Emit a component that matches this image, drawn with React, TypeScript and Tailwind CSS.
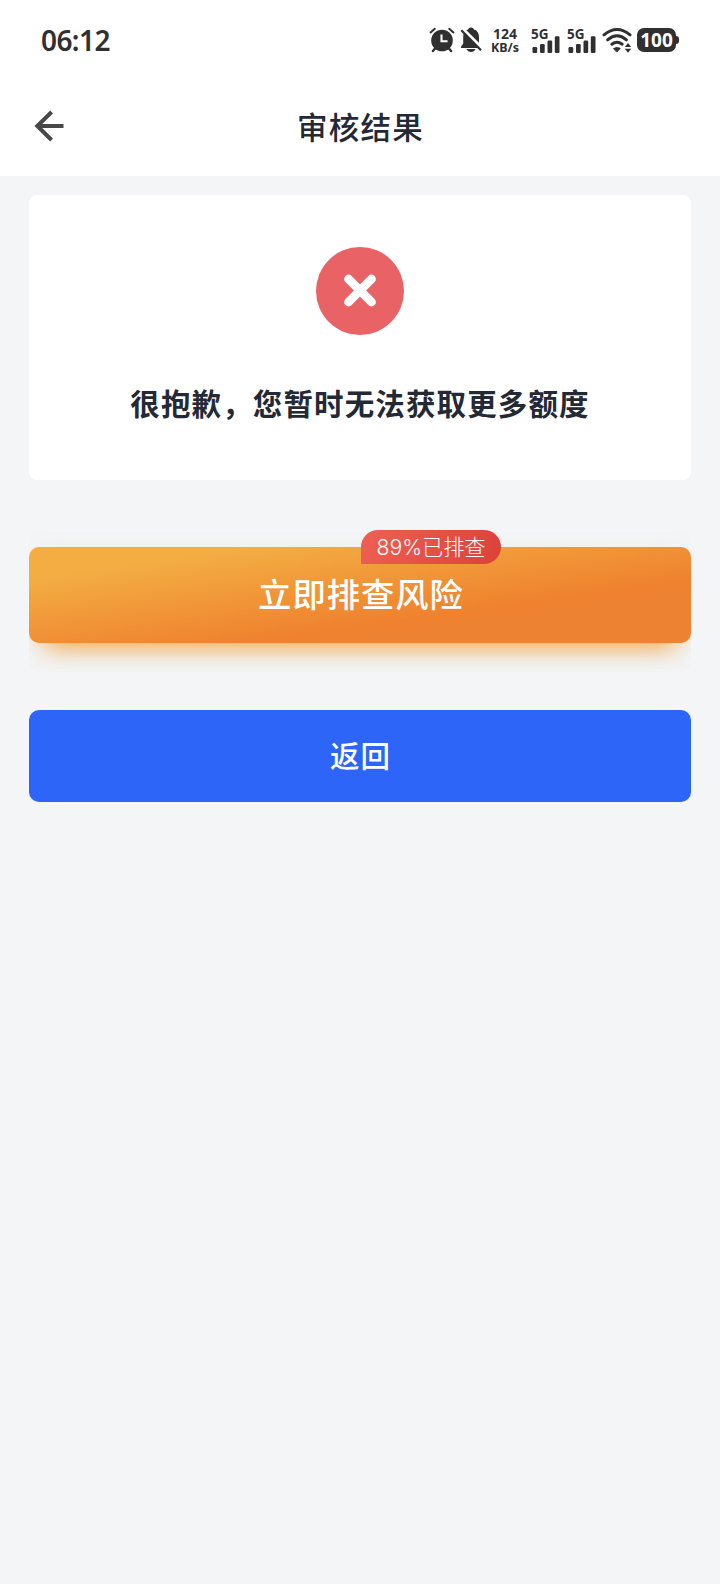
function AlarmIcon() {
  return (
    <svg className="-ml-px h-7 w-7 shrink-0" viewBox="428 26 28 28" fill="none" stroke="#303030" strokeLinecap="round">
      <circle cx="442" cy="40.5" r="10.8" fill="#303030" stroke="none" />
      <path d="M430.6 32.4l4.2-3.6M453.4 32.4l-4.2-3.6" strokeWidth="2" />
      <path d="M435.5 48l-2.6 3M448.5 48l2.6 3" strokeWidth="2.4" />
      <path d="M441.5 35.5v5.7h5" stroke="#fff" strokeWidth="2.1" strokeLinecap="square" />
    </svg>
  );
}

function BellOffIcon() {
  return (
    <svg className="h-7 w-6 shrink-0" viewBox="459 26 24 28" fill="#303030">
      <path d="M471 27.6a3 3 0 0 1 3 2c3.400 1 5 4 5 7.400v6.400l2 3.400v1.100h-20v-1.100l2.200-3.400v-6.400c0-3.600 1.500-6.400 4.800-7.400a3 3 0 0 1 3-2z" />
      <path d="M466.500 49h9q-1.300 3-4.500 3t-4.500-3z" />
      <path d="M461.800 28.200l21 21" stroke="#fff" strokeWidth="3.600" />
      <path d="M461.300 30.300l19.700 20" stroke="#303030" strokeWidth="2.300" />
    </svg>
  );
}

function Signal() {
  return (
    <div className="flex h-[25px] w-7 shrink-0 flex-col justify-between">
      <span className="h-[11px] text-[13.500px] leading-[13px] font-bold">5G</span>
      <svg className="-mt-[3px] ml-[1px] h-[17px] w-7 shrink-0" viewBox="0 0 28 17" fill="#303030">
        <rect x="0.500" y="11" width="4.700" height="6" rx="1.200" />
        <rect x="8" y="8" width="4.700" height="9" rx="1.200" />
        <rect x="15.500" y="4.500" width="4.700" height="12.500" rx="1.200" />
        <rect x="22.800" y="0.300" width="4.700" height="16.700" rx="1.200" />
      </svg>
    </div>
  );
}

function WifiIcon() {
  return (
    <svg className="h-7 w-[30px] shrink-0" viewBox="602 26 30 28" fill="none" stroke="#303030" strokeWidth="3" strokeLinecap="round">
      <path d="M604 34.800Q617 24.200 630 34.800" />
      <path d="M607.600 39.800Q617 31.700 626.400 39.800" />
      <path d="M611.800 44.200Q617 40.400 622.200 44.200" />
      <path d="M613.800 48.400q3.200-1.800 6.400 0L617 51.800z" fill="#303030" strokeWidth="1" strokeLinejoin="round" />
      <path d="M624.800 47h6.400l-3.200-4zM624.800 48.800h6.400l-3.200 4z" fill="#303030" stroke="none" />
    </svg>
  );
}

function StatusBar() {
  return (
    <div className="flex h-20 items-center pl-[41px] font-['Noto_Sans',sans-serif] text-[#303030]">
      <time className="w-[388px] text-[28px] leading-none font-semibold tracking-[-0.600px]">06:12</time>
      <AlarmIcon />
      <div className="ml-[3px] flex">
        <BellOffIcon />
      </div>
      <div className="ml-[6px] flex w-8 flex-col items-center pt-[2px] leading-[14px] font-bold">
        <span className="h-[14px] text-[14px]">124</span>
        <span className="h-[14px] text-[12.500px]">KB/s</span>
      </div>
      <div className="ml-[10px] flex gap-[8px]">
        <Signal />
        <Signal />
      </div>
      <div className="ml-[7px] flex">
        <WifiIcon />
      </div>
      <div className="ml-[5px] flex items-center">
        <div className="flex h-6 w-[39px] items-center justify-center rounded-[7px] bg-[#303030] text-[19px] leading-none font-bold text-white">
          100
        </div>
        <div className="h-2 w-[3px] rounded-r-full bg-[#303030]" />
      </div>
    </div>
  );
}

function Header() {
  return (
    <header className="grid h-24 grid-cols-[100px_1fr_100px] items-start">
      <button aria-label="返回" className="pt-[30px] pl-[34px]">
        <svg className="h-8 w-8" viewBox="0 0 32 32" fill="none" stroke="#484848" strokeWidth="4">
          <path d="M17.600 2L3.300 16l14.300 14M3 16h26.500" />
        </svg>
      </button>
      <h1 className="pt-[30px] pl-px text-center text-[30.500px] leading-[32px] font-medium tracking-[1.200px]">审核结果</h1>
      <span />
    </header>
  );
}

export default function App() {
  return (
    <div className="flex min-h-[1584px] w-[720px] flex-col bg-[#f3f5f7] font-['Noto_Sans_CJK_SC',sans-serif] text-[#232a35]">
      <div className="bg-white">
        <StatusBar />
        <Header />
      </div>
      <main className="flex flex-col px-[29px] pt-[19px]">
        <section className="flex h-[285px] flex-col items-center rounded-lg bg-white pt-[52px]">
          <svg className="h-[88px] w-[88px]" viewBox="0 0 88 88">
            <circle cx="44" cy="44" r="44" fill="#e96265" />
            <path d="M32.500 32L55.500 55M55.500 32L32.500 55" stroke="#fff" strokeWidth="8.800" strokeLinecap="round" />
          </svg>
          <p className="mt-[47px] text-[29.500px] leading-[40px] font-bold tracking-[1.130px] whitespace-nowrap">
            很抱歉，您暂时无法获取更多额度
          </p>
        </section>
        <div className="mt-[42px] h-[150px] overflow-hidden pt-[25px]">
          <button className="relative flex h-24 w-full items-center justify-center rounded-[10px] bg-[linear-gradient(172deg,#f3ad43_17%,#ef822f_66%,#ed8233_74%)] pb-1 pl-[2px] text-[33.300px] leading-none font-medium tracking-[1px] text-white shadow-[0_24px_22px_-18px_#f2a03cc0,0_8px_28px_-6px_#f2a03c40]">
            立即排查风险
            <span className="absolute -top-[17px] left-[332px] flex h-[34px] w-[140px] items-center justify-center rounded-[17px] rounded-bl-none bg-[linear-gradient(115deg,#ef6054,#db4239)] pt-[2px] font-['Inter','Noto_Sans_CJK_SC',sans-serif] text-[21.200px] leading-none font-light tracking-normal whitespace-nowrap">
              89%已排查
            </span>
          </button>
        </div>
        <button className="mt-[38px] flex h-[92px] items-center justify-center rounded-[10px] bg-[#2e65f9] pb-[2px] pl-px text-[29.500px] leading-none font-medium tracking-[1px] text-white">
          返回
        </button>
      </main>
    </div>
  );
}
